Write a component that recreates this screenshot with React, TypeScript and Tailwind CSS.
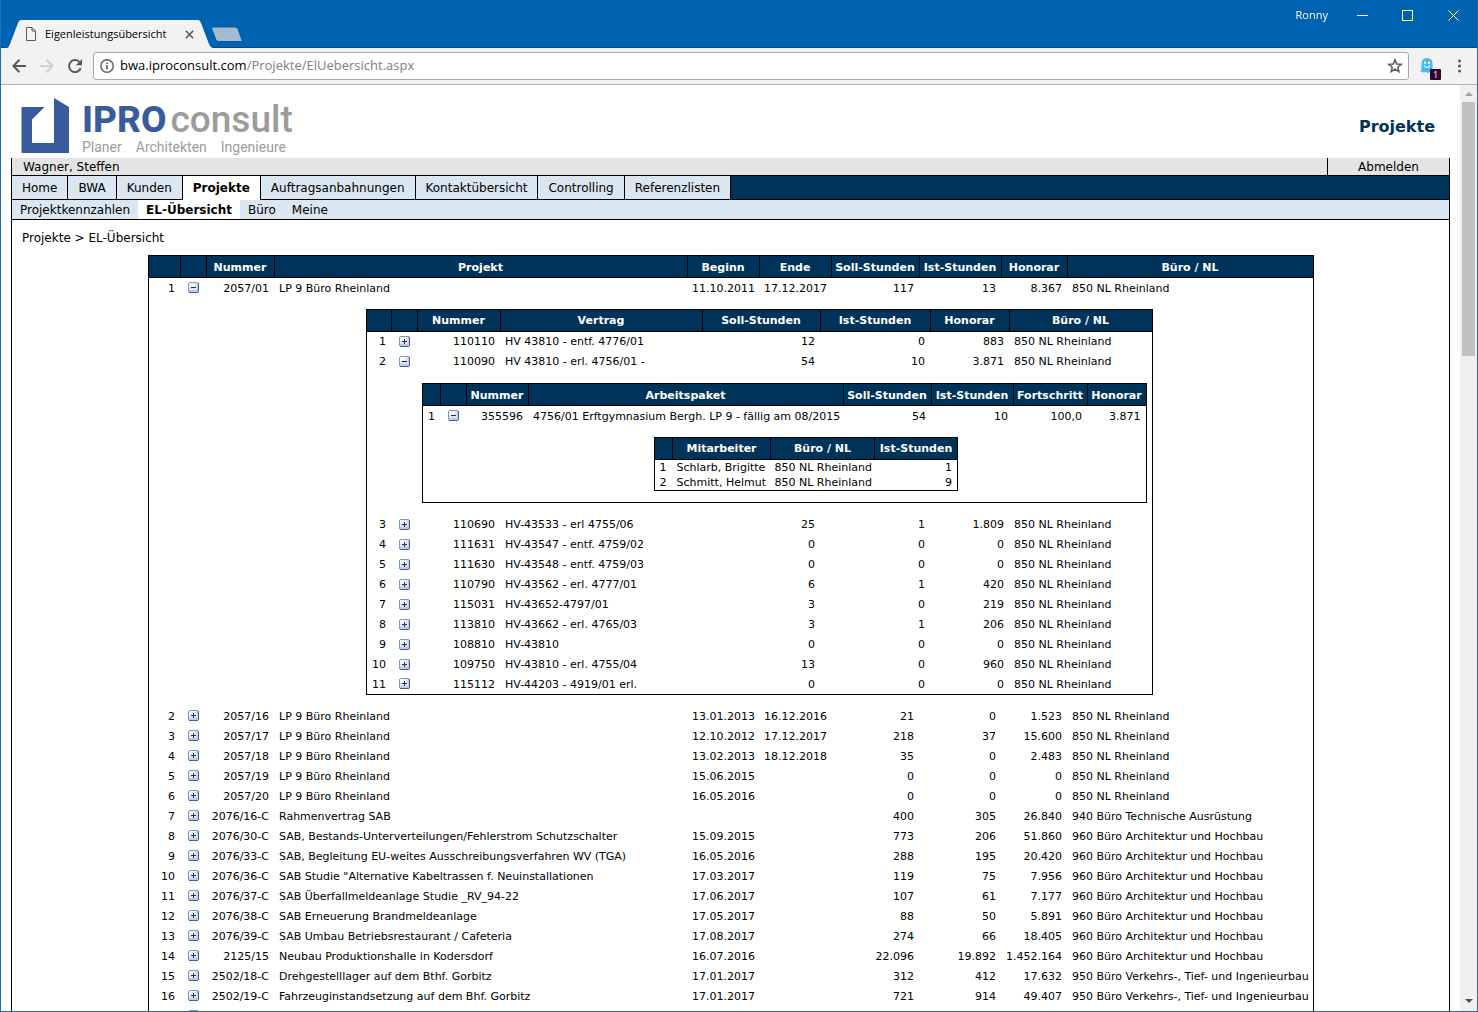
import React from "react";

type Align = "l" | "r";

function Toggle({ open, label }: { open?: boolean; label: string }) {
  return (
    <button type="button" aria-label={label} aria-expanded={!!open} className="mx-auto block size-[11px]">
      <svg viewBox="0 0 11 11" className="block size-[11px]" shapeRendering="crispEdges">
        <path d="M1 0H10V1H11V10H10V11H1V10H0V1H1Z" fill="#8497b6" />
        <rect x="1" y="1" width="9" height="9" fill="#bccbe6" />
        <rect x="1" y="1" width="8" height="7" fill="#dbe4f4" />
        <rect x="1" y="1" width="6" height="4" fill="#f6f8fd" />
        <rect x="10" y="1" width="1" height="9" fill="#4a5f85" />
        <rect x="1" y="10" width="9" height="1" fill="#4a5f85" />
        <rect x="3" y="5" width="5" height="1" fill="#22304d" />
        {!open && <rect x="5" y="3" width="1" height="5" fill="#22304d" />}
      </svg>
    </button>
  );
}

function Head({ names }: { names: string[] }) {
  return (
    <thead>
      <tr className="h-[22px] bg-[#003359] text-white">
        {names.map((n, i) => (
          <th key={i} scope="col" className="border border-black p-0 pt-[2px] font-bold whitespace-nowrap">
            {n}
          </th>
        ))}
      </tr>
    </thead>
  );
}

function Row({ cells, aligns, open }: { cells: string[]; aligns: Align[]; open?: boolean }) {
  return (
    <tr className="h-5">
      <td className="p-0 pt-[2px] pr-[5px] text-right">{cells[0]}</td>
      <td className="p-0">
        <Toggle open={open} label={(open ? "Zuklappen " : "Aufklappen ") + cells[1]} />
      </td>
      {cells.slice(1).map((c, i) => (
        <td
          key={i}
          className={
            aligns[i] === "r"
              ? "p-0 pt-[2px] pr-[5px] text-right whitespace-nowrap"
              : "p-0 pt-[2px] pl-[5px] whitespace-nowrap"
          }
        >
          {c}
        </td>
      ))}
    </tr>
  );
}

const projectAligns: Align[] = ["r", "l", "l", "l", "r", "r", "r", "l"];
const contractAligns: Align[] = ["r", "l", "r", "r", "r", "l"];
const packageAligns: Align[] = ["r", "l", "r", "r", "r", "r"];

const NL = "850 NL Rheinland";
const AH = "960 Büro Architektur und Hochbau";
const VT = "950 Büro Verkehrs-, Tief- und Ingenieurbau";

const projects: string[][] = [
  ["2", "2057/16", "LP 9 Büro Rheinland", "13.01.2013", "16.12.2016", "21", "0", "1.523", NL],
  ["3", "2057/17", "LP 9 Büro Rheinland", "12.10.2012", "17.12.2017", "218", "37", "15.600", NL],
  ["4", "2057/18", "LP 9 Büro Rheinland", "13.02.2013", "18.12.2018", "35", "0", "2.483", NL],
  ["5", "2057/19", "LP 9 Büro Rheinland", "15.06.2015", "", "0", "0", "0", NL],
  ["6", "2057/20", "LP 9 Büro Rheinland", "16.05.2016", "", "0", "0", "0", NL],
  ["7", "2076/16-C", "Rahmenvertrag SAB", "", "", "400", "305", "26.840", "940 Büro Technische Ausrüstung"],
  ["8", "2076/30-C", "SAB, Bestands-Unterverteilungen/Fehlerstrom Schutzschalter", "15.09.2015", "", "773", "206", "51.860", AH],
  ["9", "2076/33-C", "SAB, Begleitung EU-weites Ausschreibungsverfahren WV (TGA)", "16.05.2016", "", "288", "195", "20.420", AH],
  ["10", "2076/36-C", 'SAB Studie "Alternative Kabeltrassen f. Neuinstallationen', "17.03.2017", "", "119", "75", "7.956", AH],
  ["11", "2076/37-C", "SAB Überfallmeldeanlage Studie _RV_94-22", "17.06.2017", "", "107", "61", "7.177", AH],
  ["12", "2076/38-C", "SAB Erneuerung Brandmeldeanlage", "17.05.2017", "", "88", "50", "5.891", AH],
  ["13", "2076/39-C", "SAB Umbau Betriebsrestaurant / Cafeteria", "17.08.2017", "", "274", "66", "18.405", AH],
  ["14", "2125/15", "Neubau Produktionshalle in Kodersdorf", "16.07.2016", "", "22.096", "19.892", "1.452.164", AH],
  ["15", "2502/18-C", "Drehgestelllager auf dem Bthf. Gorbitz", "17.01.2017", "", "312", "412", "17.632", VT],
  ["16", "2502/19-C", "Fahrzeuginstandsetzung auf dem Bhf. Gorbitz", "17.01.2017", "", "721", "914", "49.407", VT],
  ["", "", "", "", "", "", "", "", ""],
];

const contracts: string[][] = [
  ["3", "110690", "HV-43533 - erl 4755/06", "25", "1", "1.809", NL],
  ["4", "111631", "HV-43547 - entf. 4759/02", "0", "0", "0", NL],
  ["5", "111630", "HV-43548 - entf. 4759/03", "0", "0", "0", NL],
  ["6", "110790", "HV-43562 - erl. 4777/01", "6", "1", "420", NL],
  ["7", "115031", "HV-43652-4797/01", "3", "0", "219", NL],
  ["8", "113810", "HV-43662 - erl. 4765/03", "3", "1", "206", NL],
  ["9", "108810", "HV-43810", "0", "0", "0", NL],
  ["10", "109750", "HV-43810 - erl. 4755/04", "13", "0", "960", NL],
  ["11", "115112", "HV-44203 - 4919/01 erl.", "0", "0", "0", NL],
];

function StaffTable() {
  return (
    <table className="mx-auto w-[304px] table-fixed border-collapse border border-black">
      <colgroup>
        <col className="w-[18px]" />
        <col className="w-[98px]" />
        <col />
        <col className="w-[83px]" />
      </colgroup>
      <Head names={["", "Mitarbeiter", "Büro / NL", "Ist-Stunden"]} />
      <tbody>
        {[
          ["1", "Schlarb, Brigitte", NL, "1"],
          ["2", "Schmitt, Helmut", NL, "9"],
        ].map((r, i) => (
          <tr key={r[0]} className={i === 0 ? "h-4" : "h-[15px]"}>
            <td className="p-0 pt-px pr-[6px] text-right">{r[0]}</td>
            <td className="p-0 pt-px pl-1 whitespace-nowrap">{r[1]}</td>
            <td className="p-0 pt-px pl-1 whitespace-nowrap">{r[2]}</td>
            <td className="p-0 pt-px pr-[5px] text-right">{r[3]}</td>
          </tr>
        ))}
      </tbody>
    </table>
  );
}

function PackageTable() {
  return (
    <table className="ml-auto w-[725px] table-fixed border-collapse border border-black">
      <colgroup>
        <col className="w-[18px]" />
        <col className="w-[26px]" />
        <col className="w-[62px]" />
        <col />
        <col className="w-[88px]" />
        <col className="w-[82px]" />
        <col className="w-[74px]" />
        <col className="w-[59px]" />
      </colgroup>
      <Head names={["", "", "Nummer", "Arbeitspaket", "Soll-Stunden", "Ist-Stunden", "Fortschritt", "Honorar"]} />
      <tbody>
        <Row
          open
          aligns={packageAligns}
          cells={["1", "355596", "4756/01 Erftgymnasium Bergh. LP 9 - fällig am 08/2015", "54", "10", "100,0", "3.871"]}
        />
        <tr>
          <td colSpan={8} className="p-0 pt-[11px] pb-[11px] pl-11">
            <StaffTable />
          </td>
        </tr>
      </tbody>
    </table>
  );
}

function ContractTable() {
  return (
    <table className="mx-auto w-[787px] table-fixed border-collapse border border-black">
      <colgroup>
        <col className="w-[25px]" />
        <col className="w-[26px]" />
        <col className="w-[83px]" />
        <col />
        <col className="w-[118px]" />
        <col className="w-[110px]" />
        <col className="w-[79px]" />
        <col className="w-[143px]" />
      </colgroup>
      <Head names={["", "", "Nummer", "Vertrag", "Soll-Stunden", "Ist-Stunden", "Honorar", "Büro / NL"]} />
      <tbody>
        <Row aligns={contractAligns} cells={["1", "110110", "HV 43810 - entf. 4776/01", "12", "0", "883", NL]} />
        <Row open aligns={contractAligns} cells={["2", "110090", "HV 43810 - erl. 4756/01 -", "54", "10", "3.871", NL]} />
        <tr>
          <td colSpan={8} className="p-0 pt-3 pr-[5px] pb-[11px]">
            <PackageTable />
          </td>
        </tr>
        {contracts.map((c) => (
          <Row key={c[0]} cells={c} aligns={contractAligns} />
        ))}
      </tbody>
    </table>
  );
}

function ProjectTable() {
  return (
    <table className="mx-auto w-[1166px] table-fixed border-collapse border border-black text-[11px] leading-[14px]">
      <colgroup>
        <col className="w-8" />
        <col className="w-[26px]" />
        <col className="w-[68px]" />
        <col />
        <col className="w-[72px]" />
        <col className="w-[72px]" />
        <col className="w-[88px]" />
        <col className="w-[82px]" />
        <col className="w-[66px]" />
        <col className="w-[246px]" />
      </colgroup>
      <Head names={["", "", "Nummer", "Projekt", "Beginn", "Ende", "Soll-Stunden", "Ist-Stunden", "Honorar", "Büro / NL"]} />
      <tbody>
        <Row
          open
          aligns={projectAligns}
          cells={["1", "2057/01", "LP 9 Büro Rheinland", "11.10.2011", "17.12.2017", "117", "13", "8.367", NL]}
        />
        <tr>
          <td colSpan={10} className="p-0 pt-[11px] pb-[11px] pl-[57px]">
            <ContractTable />
          </td>
        </tr>
        {projects.map((p, i) => (
          <Row key={i} cells={p} aligns={projectAligns} />
        ))}
      </tbody>
    </table>
  );
}

function Logo() {
  return (
    <div className="flex items-start font-['Roboto',sans-serif]">
      <svg viewBox="0 0 49 57" className="block h-[57px] w-[49px]" aria-hidden="true">
        <path d="M0.500 10H23.500L11 22.500V46H33V1L48 10V56H0.500Z" fill="#385c9b" />
      </svg>
      <div className="pt-1 pl-3">
        <div className="flex h-[38px] items-center gap-1 text-[37px] leading-[38px]">
          <span className="font-extrabold text-[#385c9b]">IPRO</span>
          <span className="font-medium text-[#9c9c9c]">consult</span>
        </div>
        <div className="flex gap-[14px] text-sm leading-4 text-[#9c9c9c]">
          <span>Planer</span>
          <span>Architekten</span>
          <span>Ingenieure</span>
        </div>
      </div>
    </div>
  );
}

function TitleBar() {
  return (
    <div className="flex h-12 items-start justify-between border-b border-[#004a85] bg-[#0063b1]">
      <div className="flex items-start pt-5 pl-[6px]">
        <div className="relative -mb-px h-7 w-[206px]">
          <svg viewBox="0 0 206 28" className="absolute inset-0 h-7 w-[206px]" aria-hidden="true">
            <path d="M0 28Q2 27 3 24L11 3Q12 0 14 0H191Q193 0 194 3L202 24Q203 27 206 28Z" fill="#f2f2f2" />
          </svg>
          <div className="relative flex h-7 items-center pl-[19px]">
            <svg viewBox="0 0 10 14" className="h-[14px] w-[10px]" fill="none" stroke="#5a5a5a" aria-hidden="true">
              <path d="M.5.5H6L9.500 4V13.500H.5ZM6 .5V4H9.500" />
            </svg>
            <span className="ml-[9px] w-[140px] text-[11px] whitespace-nowrap">Eigenleistungsübersicht</span>
            <button type="button" aria-label="Tab schließen">
              <svg viewBox="0 0 9 9" className="block size-[9px]" stroke="#5a5a5a" strokeWidth="1.6">
                <path d="M.8.8 8.200 8.200M8.200.8.8 8.200" />
              </svg>
            </button>
          </div>
        </div>
        <button type="button" aria-label="Neuer Tab" className="mt-[6px] -ml-[3px]">
          <svg viewBox="0 0 34 17" className="block h-[17px] w-[34px]">
            <path d="M1 1H25Q27 1 28 3L32.500 15.500H8.500Q6.500 15.500 6 14Z" fill="#a4bbcf" stroke="#0058a0" />
          </svg>
        </button>
      </div>
      <div className="flex h-[31px] items-center text-white">
        <span className="mr-[29px] text-[11px] drop-shadow-sm">Ronny</span>
        <button type="button" aria-label="Minimieren" className="mr-[34px]">
          <svg viewBox="0 0 11 11" className="block size-[11px]" stroke="#fff">
            <path d="M0 5.500H11" />
          </svg>
        </button>
        <button type="button" aria-label="Maximieren" className="mr-[35px]">
          <svg viewBox="0 0 11 11" className="block size-[11px]" stroke="#fff" fill="none">
            <path d="M.5.5H10.500V10.500H.5Z" />
          </svg>
        </button>
        <button type="button" aria-label="Schließen" className="mr-[18px]">
          <svg viewBox="0 0 11 11" className="block size-[11px]" stroke="#fff">
            <path d="M.5.5 10.500 10.500M10.500.5.5 10.500" />
          </svg>
        </button>
      </div>
    </div>
  );
}

function Toolbar() {
  return (
    <div className="flex h-[37px] items-center border-b border-[#b6b4b6] bg-[#f2f2f2] pl-[11px] text-[#5a5a5a]">
      <button type="button" aria-label="Zurück">
        <svg viewBox="0 0 14 14" className="block size-[14px]" fill="none" stroke="#5a5a5a" strokeWidth="2">
          <path d="M14 7H1.500M7.500.8 1.400 7 7.500 13.200" />
        </svg>
      </button>
      <button type="button" aria-label="Vorwärts" className="ml-[14px]">
        <svg viewBox="0 0 14 14" className="block size-[14px]" fill="none" stroke="#d0d0d0" strokeWidth="2">
          <path d="M0 7H12.500M6.500.8 12.600 7 6.500 13.200" />
        </svg>
      </button>
      <button type="button" aria-label="Neu laden" className="ml-[14px]">
        <svg viewBox="0 0 14 14" className="block size-[14px]">
          <path d="M12.700 9.200A6 6 0 1 1 11.300 2.800" fill="none" stroke="#5a5a5a" strokeWidth="2" />
          <path d="M14 0V6.200H7.800Z" fill="#5a5a5a" />
        </svg>
      </button>
      <div className="ml-[11px] flex h-7 flex-1 items-center rounded-[3px] border border-[#a9a9a9] bg-white">
        <svg viewBox="0 0 14 14" className="mx-[6px] size-[14px]" aria-hidden="true">
          <circle cx="7" cy="7" r="6.200" fill="none" stroke="#5a5a5a" strokeWidth="1.400" />
          <path d="M6.200 6H7.800V10.500H6.200ZM6.200 3.400H7.800V4.900H6.200Z" fill="#5a5a5a" />
        </svg>
        <a href="#" className="flex-1 text-[13px] text-black">
          bwa.iproconsult.com<span className="text-[#808080]">/Projekte/ElUebersicht.aspx</span>
        </a>
        <button type="button" aria-label="Lesezeichen" className="mr-[5px]">
          <svg viewBox="0 0 16 16" className="block size-4" fill="none" stroke="#5a5a5a" strokeWidth="1.500">
            <path d="M8 1.800 9.700 6 14.300 6.300 10.800 9.200 11.900 13.700 8 11.200 4.100 13.700 5.200 9.200 1.700 6.300 6.300 6Z" />
          </svg>
        </button>
      </div>
      <button type="button" aria-label="Ghostery" className="relative ml-[11px] h-[22px] w-5">
        <svg viewBox="0 0 14 16" className="block h-4 w-[14px]">
          <path
            d="M1.500 6Q1.500 0 7 0T12.500 6V12L13.500 14 11 15 9.500 13.500 8 15.500 6 13.500 3.500 15 3 13.500 0 14Q1.500 12 1.500 10Z"
            fill="#44b8ea"
          />
          <circle cx="5" cy="4.800" r="1.200" fill="#fff" />
          <circle cx="9" cy="4.800" r="1.200" fill="#fff" />
          <path d="M4 7.500Q7 11.500 10 7.500" fill="none" stroke="#fff" strokeWidth="1.200" />
        </svg>
        <span className="absolute top-[14px] left-[10px] flex h-[11px] w-[11px] items-center justify-center rounded-[1px] bg-[#330033] text-[9px] leading-[11px] text-white">
          1
        </span>
      </button>
      <button type="button" aria-label="Menü" className="mr-4 ml-[18px]">
        <svg viewBox="0 0 3 14" className="block h-[14px] w-[3px]" fill="#5a5a5a">
          <circle cx="1.500" cy="2" r="1.500" />
          <circle cx="1.500" cy="7" r="1.500" />
          <circle cx="1.500" cy="12" r="1.500" />
        </svg>
      </button>
    </div>
  );
}

const sections = [
  "Home",
  "BWA",
  "Kunden",
  "Projekte",
  "Auftragsanbahnungen",
  "Kontaktübersicht",
  "Controlling",
  "Referenzlisten",
];

const pages = ["Projektkennzahlen", "EL-Übersicht", "Büro", "Meine"];

function Scrollbar() {
  return (
    <div className="flex w-[17px] flex-col items-center bg-[#f0f0f0]" aria-hidden="true">
      <div className="flex h-[17px] items-center">
        <svg viewBox="0 0 8 4" className="h-1 w-2">
          <path d="M0 4 4 0 8 4Z" fill="#a3a3a3" />
        </svg>
      </div>
      <div className="h-[254px] w-[13px] bg-[#c1c1c1]" />
      <div className="mt-auto flex h-5 items-center">
        <svg viewBox="0 0 8 4" className="h-1 w-2">
          <path d="M0 0 4 4 8 0Z" fill="#505050" />
        </svg>
      </div>
    </div>
  );
}

export default function App() {
  return (
    <div className="flex h-screen flex-col overflow-hidden border border-t-0 border-[#1a6fb5] bg-white font-['DejaVu_Sans',sans-serif] text-xs text-black">
      <header className="font-['Open_Sans',sans-serif]">
        <TitleBar />
        <Toolbar />
      </header>
      <div className="flex min-h-0 flex-1">
        <main className="flex min-w-0 flex-1 flex-col overflow-hidden px-[10px]">
          <div className="flex h-[73px] shrink-0 items-start justify-between pr-[15px] pl-[10px]">
            <div className="pt-3">
              <Logo />
            </div>
            <h1 className="pt-[30px] text-base font-bold text-[#003359]">Projekte</h1>
          </div>
          <div className="flex min-h-0 flex-1 flex-col border-x border-black">
            <div className="flex h-[18px] shrink-0 border-b border-black bg-[#e4e4e4] leading-[18px]">
              <span className="flex-1 pl-[11px]">Wagner, Steffen</span>
              <a href="#" className="w-[122px] border-l border-black text-center">
                Abmelden
              </a>
            </div>
            <nav className="flex h-6 shrink-0 bg-[#003359] leading-6">
              {sections.map((s) => (
                <a
                  key={s}
                  href="#"
                  className={
                    s === "Projekte"
                      ? "border-r border-black bg-white px-[10px] font-bold"
                      : "border-r border-b border-black bg-[#dae6f0] px-[10px]"
                  }
                >
                  {s}
                </a>
              ))}
              <span className="flex-1 border-b border-black" />
            </nav>
            <nav className="flex h-5 shrink-0 border-b border-black bg-[#dae6f0] leading-5">
              {pages.map((s) => (
                <a key={s} href="#" className={s === "EL-Übersicht" ? "bg-white px-2 font-bold" : "px-2"}>
                  {s}
                </a>
              ))}
            </nav>
            <p className="shrink-0 px-[10px] pt-[10px] pb-[9px] leading-4">Projekte &gt; EL-Übersicht</p>
            <div className="min-h-0 flex-1 overflow-hidden">
              <ProjectTable />
            </div>
          </div>
        </main>
        <Scrollbar />
      </div>
    </div>
  );
}
